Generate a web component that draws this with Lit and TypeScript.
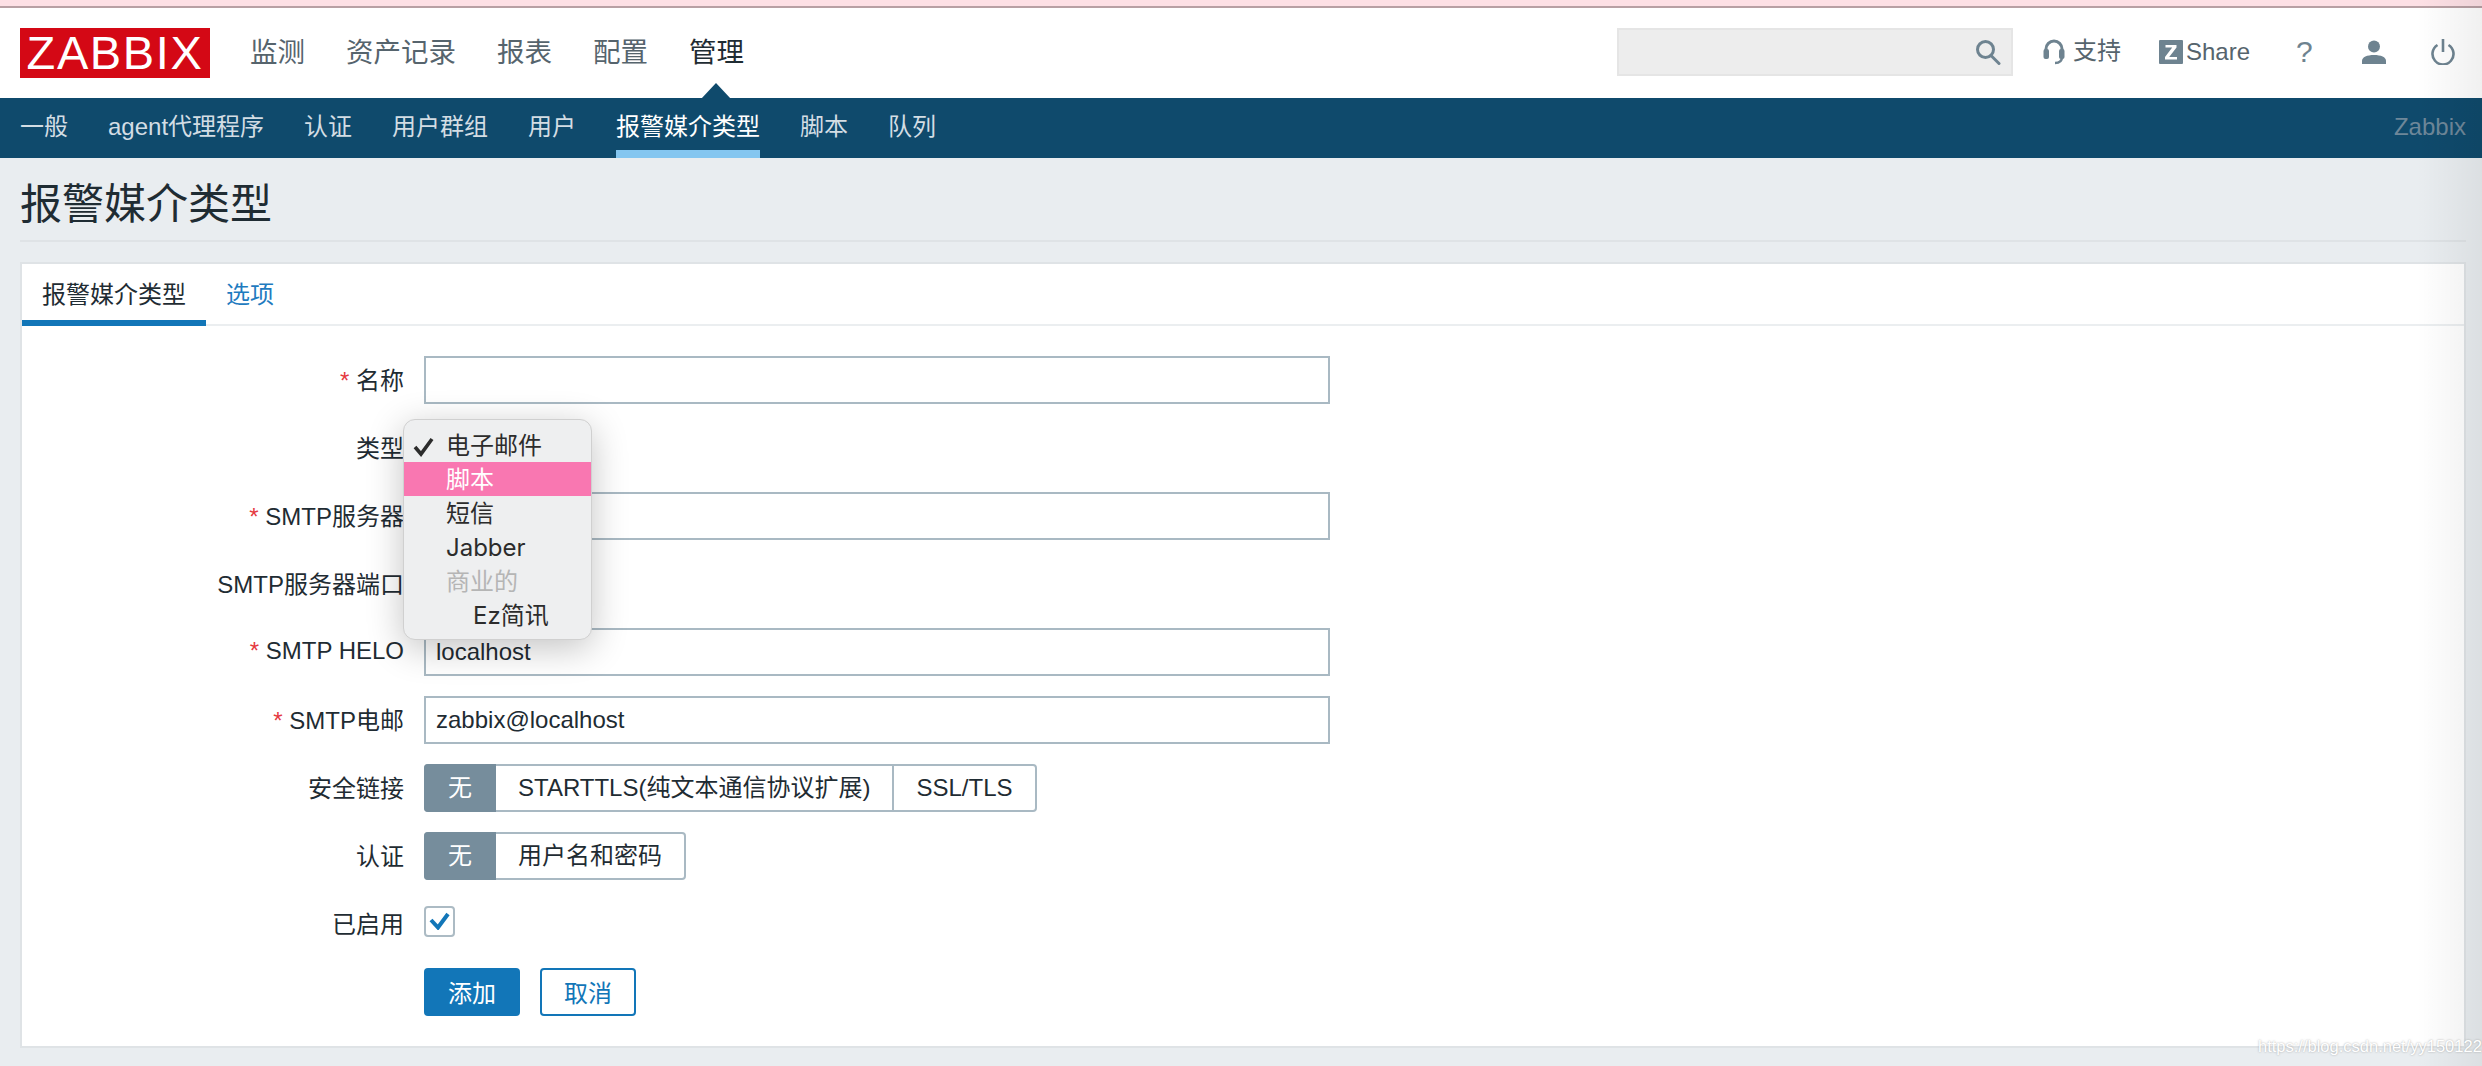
import { LitElement, html, css } from "lit";
import { customElement } from "lit/decorators.js";

@customElement("app-root")
export class AppRoot extends LitElement {
  static styles = css`
    :host { display: block; position: relative; width: 2482px; height: 1066px; overflow: hidden; background: #e9edf0;
      font-family: "Liberation Sans", "Noto Sans CJK SC", sans-serif; font-size: 24px; color: #1f2c33; }
    .pink { height: 6px; background: #fde0e5; border-bottom: 2px solid #b8a0a4; }
    .header { height: 90px; background: #fff; display: flex; align-items: center; padding: 0 26px 0 20px; }
    .logo { width: 190px; height: 50px; background: #d40815; color: #fff; font-size: 47px; line-height: 50px; letter-spacing: 1.6px; text-align: center; white-space: nowrap; }
    .nav { display: flex; gap: 41px; margin-left: 40px; font-size: 27.5px; color: #56646d; margin-top: -6px; }
    .nav .on { color: #1f2c33; position: relative; }
    .tri { position: absolute; left: 12px; top: 53px; width: 0; height: 0; border-left: 15.5px solid transparent; border-right: 15.5px solid transparent; border-bottom: 16px solid #0f4a6c; }
    .right { margin-left: auto; display: flex; align-items: center; color: #56646d; margin-top: -2px; }
    .search { width: 396px; height: 48px; box-sizing: border-box; background: #ededed; border: 2px solid #e5e5e5; display: flex; align-items: center; justify-content: flex-end; padding-right: 10px; margin-right: 30px; }
    svg { display: block; flex: none; }
    .sup { margin-left: 8px; margin-right: 38px; line-height: 30px; padding-bottom: 2px; }
    .share { margin-left: 3px; margin-right: 46px; }
    .q { width: 17px; font-size: 30px; margin-right: 49px; color: #6e8390; line-height: 30px; }
    .usr { margin-right: 44px; }
    .sub { height: 60px; background: #0f4a6c; display: flex; padding: 0 16px 0 20px; gap: 40px; color: #d3dde4; box-sizing: border-box; }
    .sub div { height: 60px; line-height: 57px; box-sizing: border-box; white-space: nowrap; }
    .sub .on { color: #fff; border-bottom: 8px solid #84c6f0; }
    .sub .brand { margin-left: auto; color: #6e8799; }
    .main { padding: 17px 16px 0 20px; }
    h1 { margin: 0; font-size: 42px; font-weight: 400; line-height: 60px; padding-bottom: 5px; border-bottom: 2px solid #dfe3e6; color: #1f2c33; }
    .card { margin-top: 20px; height: 786px; box-sizing: border-box; border: 2px solid #dfe3e6; background: #fff; }
    .tabs { display: flex; height: 62px; box-sizing: border-box; border-bottom: 2px solid #ebeef0; }
    .tab { padding: 0 20px; height: 62px; line-height: 62px; box-sizing: border-box; color: #1f7bbf; }
    .tab.on { color: #1f2c33; border-bottom: 6px solid #1276b8; }
    .form { display: grid; grid-template-columns: 382px 1fr; column-gap: 20px; row-gap: 20px; padding-top: 30px; grid-auto-rows: 48px; align-items: center; }
    .lbl { text-align: right; white-space: nowrap; padding-bottom: 3px; }
    .star { color: #e5393f; }
    .ctl { position: relative; display: flex; height: 48px; align-items: center; }
    .inp { width: 906px; height: 48px; box-sizing: border-box; border: 2px solid #a9b9c3; padding: 0 10px; line-height: 43px; }
    .seg { display: flex; height: 48px; box-sizing: border-box; border: 2px solid #a9b9c3; border-radius: 4px; }
    .seg div { padding: 0 22px; line-height: 43px; border-left: 2px solid #a9b9c3; white-space: nowrap; }
    .seg .a { width: 72px; margin: -2px 0 -2px -2px; padding: 0; height: 48px; line-height: 47px; text-align: center; box-sizing: border-box; background: #768d9c; color: #fff; border: 0; border-radius: 4px 0 0 4px; }
    .seg .a + div { border-left: 0; }
    .check { width: 31px; height: 31px; box-sizing: border-box; border: 2px solid #acbbc4; border-radius: 4px; display: flex; align-items: center; justify-content: center; margin-bottom: 6px; }
    .btns { display: flex; gap: 20px; }
    .btn { width: 96px; height: 48px; box-sizing: border-box; border-radius: 4px; background: #1276b8; color: #fff; text-align: center; line-height: 51px; }
    .btn.alt { background: #fff; color: #1276b8; border: 2px solid #1276b8; line-height: 47px; }
    .menu { position: absolute; left: -21px; top: -5px; width: 189px; height: 221px; box-sizing: border-box; padding: 8px 0 0; border-radius: 12px; background: #eeeff0; border: 1px solid #d0d0d0;
      box-shadow: 0 8px 36px rgba(0,0,0,.24); color: #2c2c2c; z-index: 5; font-family: "Inter", "Noto Sans CJK SC", sans-serif; font-size: 24px; }
    .mi { height: 34px; line-height: 35px; padding-left: 42px; position: relative; white-space: nowrap; }
    .mi.hl { background: #f977b1; color: #fff; }
    .mi.dis { color: #b5b5b5; }
    .mi.in { padding-left: 69px; }
    .mi svg { position: absolute; left: 9px; top: 9px; }
    .fade { position: absolute; right: 0; top: 0; bottom: 0; width: 65px; background: linear-gradient(90deg, rgba(0,0,0,0), rgba(0,0,0,.06)); pointer-events: none; }
    .wm { position: absolute; left: 2258px; top: 1037px; font-size: 16.5px; color: #fff; text-shadow: 0 0 2px rgba(120,120,120,.65); white-space: nowrap; }
  `;

  render() {
    const ic = "#6e8390";
    return html`
      <div class="pink"></div>
      <div class="header">
        <div class="logo">ZABBIX</div>
        <div class="nav">
          <span>监测</span><span>资产记录</span><span>报表</span><span>配置</span>
          <span class="on">管理<i class="tri"></i></span>
        </div>
        <div class="right">
          <div class="search">
            <svg width="26" height="26" viewBox="0 0 26 26" fill="none" stroke="${ic}" stroke-width="3"><circle cx="10.5" cy="10.5" r="8"/><path d="M16 16.5l8 8" stroke-linecap="round"/></svg>
          </div>
          <svg width="22" height="26" viewBox="0 0 22 26" fill="none" stroke="${ic}" stroke-width="3"><path d="M3 16V10a8 8 0 0 1 16 0v6"/><rect x="0.5" y="10" width="5.5" height="10" rx="2" fill="${ic}" stroke="none"/><rect x="16" y="10" width="5.5" height="10" rx="2" fill="${ic}" stroke="none"/><path d="M19 18c0 4-3 6-7 6" stroke-width="2.4"/></svg>
          <span class="sup">支持</span>
          <svg width="24" height="24" viewBox="0 0 24 24"><rect width="24" height="24" rx="1" fill="${ic}"/><path d="M6.5 5h11v2.6L10.2 17H18v2.5H6v-2.6L13.2 7.5H6.5z" fill="#fff"/></svg>
          <span class="share">Share</span>
          <span class="q">?</span>
          <svg class="usr" width="24" height="24" viewBox="0 0 24 24" fill="${ic}"><circle cx="12" cy="6.5" r="6"/><path d="M0 24v-3c0-4 5-6 12-6s12 2 12 6v3z"/></svg>
          <svg width="26" height="26" viewBox="0 0 26 26" fill="none" stroke="${ic}" stroke-width="2.6"><path d="M7.5 6A10.5 10.5 0 1 0 18.5 6"/><path d="M13 0v13"/></svg>
        </div>
      </div>
      <div class="sub">
        <div>一般</div><div>agent代理程序</div><div>认证</div><div>用户群组</div><div>用户</div>
        <div class="on">报警媒介类型</div><div>脚本</div><div>队列</div>
        <div class="brand">Zabbix</div>
      </div>
      <div class="main">
        <h1>报警媒介类型</h1>
        <div class="card">
          <div class="tabs"><div class="tab on">报警媒介类型</div><div class="tab">选项</div></div>
          <div class="form">
            <div class="lbl"><span class="star">*</span> 名称</div>
            <div class="ctl"><div class="inp"></div></div>
            <div class="lbl">类型</div>
            <div class="ctl">
              <div class="menu">
                <div class="mi"><svg width="22" height="20" viewBox="0 0 22 20" fill="none" stroke="#2c2c2c" stroke-width="3.6"><path d="M2 10l6 7L19 2"/></svg>电子邮件</div>
                <div class="mi hl">脚本</div>
                <div class="mi">短信</div>
                <div class="mi">Jabber</div>
                <div class="mi dis">商业的</div>
                <div class="mi in">Ez简讯</div>
              </div>
            </div>
            <div class="lbl"><span class="star">*</span> SMTP服务器</div>
            <div class="ctl"><div class="inp"></div></div>
            <div class="lbl">SMTP服务器端口</div>
            <div class="ctl"></div>
            <div class="lbl"><span class="star">*</span> SMTP HELO</div>
            <div class="ctl"><div class="inp">localhost</div></div>
            <div class="lbl"><span class="star">*</span> SMTP电邮</div>
            <div class="ctl"><div class="inp">zabbix@localhost</div></div>
            <div class="lbl">安全链接</div>
            <div class="ctl"><div class="seg"><div class="a">无</div><div>STARTTLS(纯文本通信协议扩展)</div><div>SSL/TLS</div></div></div>
            <div class="lbl">认证</div>
            <div class="ctl"><div class="seg"><div class="a">无</div><div>用户名和密码</div></div></div>
            <div class="lbl">已启用</div>
            <div class="ctl"><div class="check"><svg width="21" height="18" viewBox="0 0 21 18" fill="none" stroke="#1276b8" stroke-width="4"><path d="M2 8l7 7.5L19 2"/></svg></div></div>
            <div></div>
            <div class="ctl btns"><div class="btn">添加</div><div class="btn alt">取消</div></div>
          </div>
        </div>
      </div>
      <div class="fade"></div>
      <div class="wm">https://blog.csdn.net/yy150122</div>
    `;
  }
}
